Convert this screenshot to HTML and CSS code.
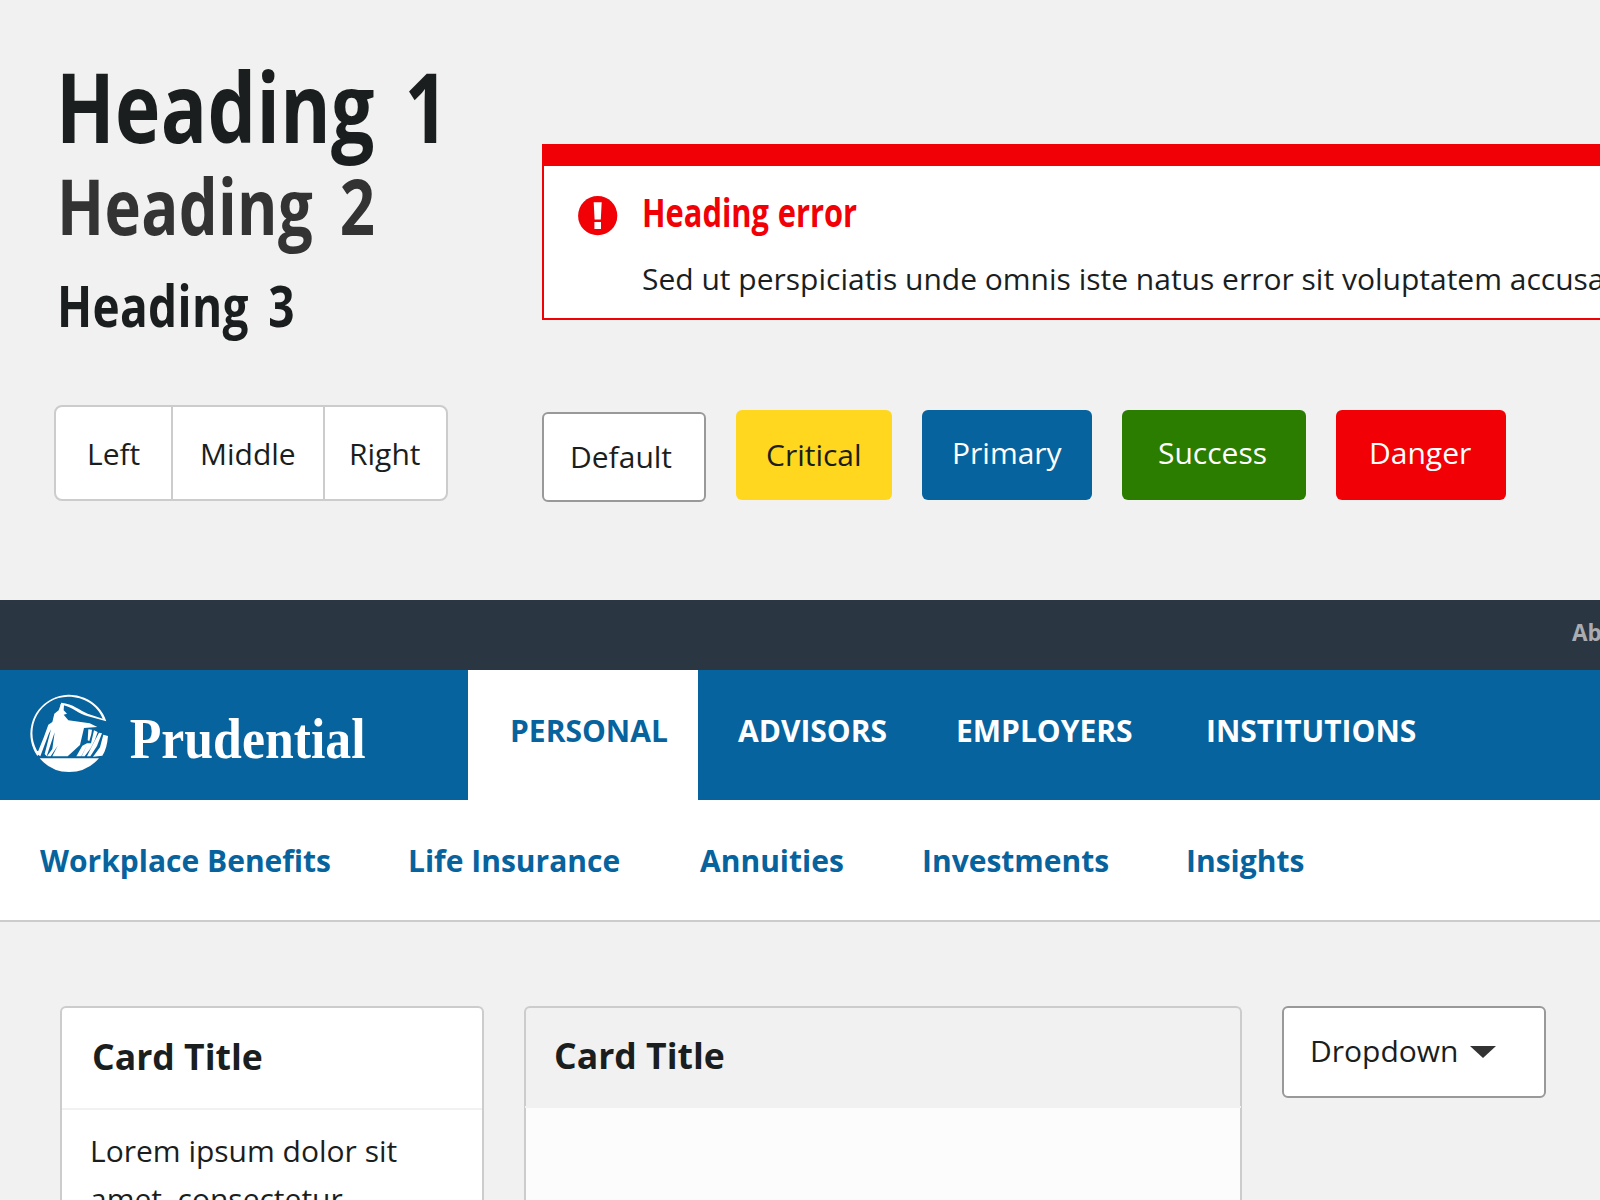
FILE: index.html
```html
<!DOCTYPE html>
<html lang="en">
<head>
<meta charset="utf-8">
<title>Prudential UI components</title>
<link rel="stylesheet" href="styles.css">
</head>
<body>
<section class="showcase">
  <div class="type-column">
    <h1 class="heading heading-1"><span class="condensed">Heading 1</span></h1>
    <h2 class="heading heading-2"><span class="condensed">Heading 2</span></h2>
    <h3 class="heading heading-3"><span class="condensed">Heading 3</span></h3>
    <div class="btn-group">
      <button class="group-btn group-left">Left</button>
      <button class="group-btn group-middle">Middle</button>
      <button class="group-btn group-right">Right</button>
    </div>
  </div>
  <div class="demo-column">
    <div class="alert">
      <svg class="alert-icon" width="40" height="40" viewBox="0 0 40 40" aria-hidden="true">
        <circle cx="19.7" cy="19.7" r="19.6" fill="#f10006"/>
        <path d="M15.7 6.2h8l-.9 17.2h-6.2zM16.4 26h6.6v6.9h-6.6z" fill="#fff"/>
      </svg>
      <div class="alert-body">
        <h4 class="alert-title"><span class="condensed">Heading error</span></h4>
        <p class="alert-text">Sed ut perspiciatis unde omnis iste natus error sit voluptatem accusantium</p>
      </div>
    </div>
    <div class="btn-row">
      <button class="btn btn-default">Default</button>
      <button class="btn btn-critical">Critical</button>
      <button class="btn btn-primary">Primary</button>
      <button class="btn btn-success">Success</button>
      <button class="btn btn-danger">Danger</button>
    </div>
  </div>
</section>

<header>
  <div class="utility-bar"><a class="utility-link">About</a></div>
  <div class="main-bar">
    <a class="brand">
      <svg width="360" height="110" viewBox="0 0 1080 330" role="img" aria-label="Prudential">
        <g fill="#fff">
          <path d="M259 124A117 117 0 1 0 52 228L61 216L51 212A109 109 0 0 1 143 50C190 49 233 76 248 116L203 101C178 90 160 72 124 68L121 76L128 82L131 76C157 82 178 103 204 109Z"/>
          <path d="M124 68L116 91L103 101L97 126L85 134L72 170L51 222L61 229L86 162L93 148L74 222L80 229L104 157L97 207L81 229L92 229L113 197L97 229L143 229L180 195L192 144L232 141L209 130L145 121L131 104L141 101L131 91L132 75Z"/>
          <path d="M205 148L216 149L214 162L208 183L203 181ZM222 151L233 156L225 179L211 206L194 229L185 229L201 196L184 229L169 229L187 197L201 190L213 190ZM237 158L246 160L231 198L211 229L201 229L216 198ZM250 164L264 168Q261 207 247 227L219 230L240 202Z"/>
          <path d="M59 235H237Q201 276 147 276Q94 276 59 235Z"/>
        </g>
        <text class="wordmark" x="329" y="235" textLength="708" lengthAdjust="spacingAndGlyphs">Prudential</text>
      </svg>
    </a>
    <nav class="main-nav">
      <a class="tab tab-active">PERSONAL</a>
      <a class="tab tab-advisors">ADVISORS</a>
      <a class="tab tab-employers">EMPLOYERS</a>
      <a class="tab">INSTITUTIONS</a>
    </nav>
  </div>
  <nav class="sub-nav">
    <a class="sub-workplace">Workplace Benefits</a>
    <a class="sub-life">Life Insurance</a>
    <a class="sub-annuities">Annuities</a>
    <a class="sub-investments">Investments</a>
    <a>Insights</a>
  </nav>
</header>

<section class="cards">
  <article class="card card-plain">
    <h3 class="card-title">Card Title</h3>
    <p class="card-text">Lorem ipsum dolor sit amet, consectetur</p>
  </article>
  <article class="card card-shaded">
    <h3 class="card-title">Card Title</h3>
    <div class="card-fill"></div>
  </article>
  <button class="dropdown">
    <span>Dropdown</span>
    <svg class="caret" width="26" height="12" viewBox="0 0 26 12" aria-hidden="true"><path d="M0 0h26L13 12z" fill="#333"/></svg>
  </button>
</section>
</body>
</html>
```
FILE: styles.css
```css
* { box-sizing: border-box; }

body {
  margin: 0;
  width: 1600px;
  height: 1200px;
  overflow: hidden;
  background: #f1f1f1;
  color: #1a1e1e;
  font-family: "Open Sans", sans-serif;
  font-size: 30px;
}

h1, h2, h3, h4, p { margin: 0; }

button {
  margin: 0;
  font: inherit;
  color: inherit;
  text-align: left;
  white-space: nowrap;
}

.showcase {
  display: grid;
  grid-template-columns: 542px 1058px;
  height: 600px;
}

.type-column { padding: 56px 0 0 54px; }

.heading { font-weight: 700; white-space: nowrap; letter-spacing: .4px; }

.condensed {
  display: inline-block;
  transform: scaleX(.8);
  transform-origin: left;
}

.heading-1 { height: 100px; line-height: 100px; font-size: 96px; margin: 0 0 10px 2px; word-spacing: 12px; }
.heading-2 { height: 80px; line-height: 80px; font-size: 77px; margin: 0 0 29px 3px; color: #333; word-spacing: 13px; }
.heading-3 { height: 60px; line-height: 60px; font-size: 57.5px; margin: 0 0 70px 3px; word-spacing: 9px; }

.btn-group {
  display: flex;
  width: 394px;
  height: 96px;
  border: 2px solid #ccc;
  border-radius: 8px;
  background: #fff;
  overflow: hidden;
}

.group-btn {
  border: 0;
  background: none;
  padding: 0;
}

.group-left { width: 117px; padding-left: 31px; border-right: 2px solid #ccc; }
.group-middle { width: 152px; padding-left: 27px; border-right: 2px solid #ccc; }
.group-right { flex: 1; padding-left: 24px; }

.demo-column { padding-top: 144px; overflow: hidden; }

.alert {
  display: flex;
  width: 1200px;
  height: 176px;
  padding: 30px 0 0 34px;
  gap: 24px;
  border: 2px solid #f10006;
  border-top-width: 22px;
  background: #fff;
}

.alert-title {
  height: 44px;
  margin-top: -6px;
  color: #f10006;
  font-size: 39px;
  line-height: 44px;
}

.alert-title .condensed { transform: scaleX(.79); word-spacing: 1px; }

.alert-text { margin-top: 21px; line-height: 48px; white-space: nowrap; }

.btn-row { display: flex; gap: 30px; margin-top: 90px; }

.btn {
  height: 90px;
  border: 0;
  border-radius: 6px;
  padding: 0 0 5px 31px;
  color: #fff;
}

.btn-default {
  width: 164px;
  margin-top: 2px;
  padding: 0 0 2px 26px;
  border: 2px solid #999;
  background: #fff;
  color: #1a1e1e;
}
.btn-critical { width: 156px; padding: 0 0 1px 30px; background: #ffd71f; color: #1a1e1e; }
.btn-primary { width: 170px; padding-left: 30px; background: #07639d; }
.btn-success { width: 184px; padding-left: 36px; background: #2b7d00; }
.btn-danger { width: 170px; padding-left: 33px; background: #f10006; }

.utility-bar {
  display: flex;
  height: 70px;
  padding-left: 1572px;
  overflow: hidden;
  background: #2b3643;
}

.utility-link { color: #a9adb1; font-size: 22.5px; font-weight: 700; line-height: 65px; }

.main-bar { display: flex; height: 130px; background: #07639d; }

.brand { width: 468px; padding: 10px 0 0 20px; }

.brand svg { display: block; }

.wordmark {
  fill: #fff;
  font-family: "Liberation Serif", serif;
  font-size: 172px;
  font-weight: 700;
}

.main-nav { display: flex; }

.tab {
  padding-left: 40px;
  color: #fff;
  font-weight: 700;
  line-height: 122px;
}

.tab-active { width: 230px; padding-left: 42px; background: #fff; color: #07639d; }
.tab-advisors { width: 218px; }
.tab-employers { width: 250px; }

.sub-nav {
  display: flex;
  height: 122px;
  padding-left: 40px;
  border-bottom: 2px solid #ccc;
  background: #fff;
  color: #07639d;
  font-weight: 700;
  line-height: 122px;
}

.sub-workplace { width: 368px; }
.sub-life { width: 292px; }
.sub-annuities { width: 222px; }
.sub-investments { width: 264px; }

.cards {
  display: flex;
  height: 278px;
  padding: 84px 0 0 60px;
  overflow: hidden;
}

.card {
  height: 194px;
  border: 2px solid #ccc;
  border-bottom: 0;
  border-radius: 6px 6px 0 0;
}

.card-plain { width: 424px; margin-right: 40px; background: #fff; }
.card-shaded { width: 718px; margin-right: 40px; }

.card-title { font-size: 35.6px; font-weight: 700; }

.card-plain .card-title {
  height: 102px;
  padding-left: 30px;
  border-bottom: 2px solid #f1f1f1;
  line-height: 97px;
}

.card-text { width: 370px; padding: 17px 0 0 28px; line-height: 48px; }

.card-shaded .card-title {
  height: 100px;
  margin: 0 -1px;
  padding-left: 29px;
  border-bottom: 2px solid #f1f1f1;
  line-height: 94px;
}

.card-fill { height: 92px; background: #fcfcfc; }

.dropdown {
  display: flex;
  align-items: center;
  gap: 12px;
  width: 264px;
  height: 92px;
  padding: 0 0 4px 26px;
  border: 2px solid #999;
  border-radius: 6px;
  background: #fff;
}

.caret { margin-top: 3px; }
```
